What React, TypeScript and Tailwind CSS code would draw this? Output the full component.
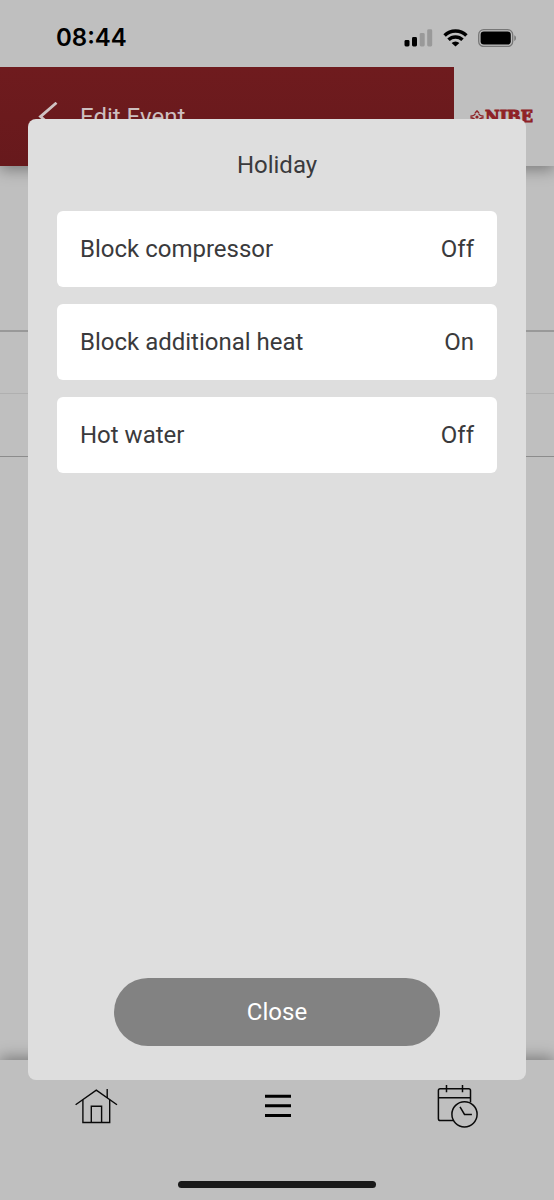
import { useState } from 'react'

const settings = [
  { label: 'Block compressor', value: 'Off' },
  { label: 'Block additional heat', value: 'On' },
  { label: 'Hot water', value: 'Off' }
]

function StatusBar() {
  return (
    <div className="relative z-20 flex h-[67px] shrink-0 items-center justify-between bg-[#bfbfbf] pt-2 pr-[37px] pl-14">
      <span className="font-['Inter'] text-2xl font-semibold text-black">08:44</span>
      <div className="flex items-center gap-[10px]">
        <svg width="29" height="18" viewBox="0 0 29 18" aria-hidden="true">
          <rect x="0.5" y="11" width="5" height="6.5" rx="1.4" />
          <rect x="8" y="8" width="5" height="9.5" rx="1.4" />
          <rect x="15.7" y="4" width="5" height="13.5" rx="1.4" fill="#999999" />
          <rect x="23.2" y="0.3" width="5" height="17.2" rx="1.4" fill="#999999" />
        </svg>
        <svg width="25" height="18" viewBox="0 0 25 18" fill="none" stroke="#000" strokeWidth="3.5" aria-hidden="true">
          <path d="M1.6 6.4a15.6 15.6 0 0 1 21.8 0" />
          <path d="M5.5 10.8a10 10 0 0 1 14 0" />
          <path d="M12.5 17.6 8.6 14a5.5 5.5 0 0 1 7.8 0z" fill="#000" stroke="none" />
        </svg>
        <svg width="39" height="18" viewBox="0 0 39 18" aria-hidden="true">
          <rect x="0.7" y="0.7" width="34" height="16.8" rx="5" fill="none" stroke="#777777" strokeWidth="1.3" />
          <rect x="2.6" y="2.6" width="30.2" height="13" rx="3.3" />
          <path d="M36.3 6.3c2.2.8 2.2 4.8 0 5.6z" fill="#777777" />
        </svg>
      </div>
    </div>
  )
}

function Header() {
  return (
    <header className="relative z-10 flex h-[99px] shrink-0 shadow-[0_4px_14px_rgba(0,0,0,0.35)]">
      <div className="flex flex-1 items-center bg-linear-to-b from-[#6f1b1e] to-[#67191c] pl-[38px]">
        <a href="#" aria-label="Back" className="w-[42px]">
          <svg width="20" height="30" viewBox="0 0 20 30" fill="none" stroke="#cfc3c3" strokeWidth="2.8" aria-hidden="true">
            <path d="M18.5 0.8 2.5 14.6l16 13.8" />
          </svg>
        </a>
        <h1 className="text-2xl text-[#cdbfc0]">Edit Event</h1>
      </div>
      <div className="flex w-[100px] items-center gap-px bg-[#bfbfbf] pl-4 text-[#8f2226]">
        <svg width="14" height="14" viewBox="0 0 14 14" fill="none" stroke="currentColor" strokeWidth="1.4" aria-hidden="true">
          <path d="M5 2.9 7 .9l2 2M5 11.1l2 2 2-2" />
          <path d="M.4 6.2Q4.6 5.8 5.2 3.6M13.6 6.2Q9.4 5.8 8.8 3.6M.4 7.8Q4.6 8.2 5.2 10.4M13.6 7.8Q9.4 8.2 8.8 10.4" />
          <circle cx="7" cy="7" r="1.6" fill="currentColor" stroke="none" />
        </svg>
        <span className="font-['DejaVu_Serif'] text-base font-bold [-webkit-text-stroke:1px_#8f2226]">NIBE</span>
      </div>
    </header>
  )
}

function BottomNav() {
  return (
    <nav className="relative z-10 flex h-[140px] shrink-0 flex-col items-center bg-[#bfbfbf] shadow-[0_-3px_14px_rgba(0,0,0,0.35)]">
      <div className="flex w-full flex-1 items-start justify-between pt-6 pr-[76px] pl-[75px]">
        <a href="#" aria-label="Home">
          <svg width="43" height="42" viewBox="0 0 43 42" fill="none" stroke="#0a0a0a" strokeWidth="1.4" aria-hidden="true">
            <path d="M.6 20.8 21.3 6.2 42 20.8" />
            <path d="M7.9 15.8v22.7h26.8V15.8" />
            <path d="M16.3 38.5V22.3h10.3v16.2" />
            <path d="M32.2 5v9" />
          </svg>
        </a>
        <button type="button" aria-label="Menu">
          <svg width="26" height="42" viewBox="0 0 26 42" stroke="#000" strokeWidth="3" aria-hidden="true">
            <path d="M0 12.2h26M0 21.8h26M0 31.4h26" />
          </svg>
        </button>
        <a href="#" aria-label="Schedule">
          <svg width="41" height="44" viewBox="0 0 41 44" fill="none" stroke="#0a0a0a" strokeWidth="1.5" aria-hidden="true">
            <path d="M16.5 36.6H3.2a1.8 1.8 0 0 1-1.8-1.8V6.6a1.8 1.8 0 0 1 1.8-1.8h28.5a1.8 1.8 0 0 1 1.8 1.8v11.8" />
            <path d="M1.4 13.7h32.1M9.5 1v7.2M25.5 1v7.2" />
            <circle cx="27.5" cy="30.3" r="12.6" />
            <path d="m23 22.8 4.5 7.6h7.4" />
          </svg>
        </a>
      </div>
      <div className="mb-3 h-[7px] w-[198px] rounded-full bg-[#1a1a1a]" />
    </nav>
  )
}

export default function App() {
  const [open, setOpen] = useState(true)

  return (
    <div className="relative flex min-h-screen flex-col bg-[#bfbfbf] font-['Roboto',sans-serif]">
      <StatusBar />
      <Header />

      {/* Event form behind the dialog */}
      <main className="flex-1">
        <div className="h-[166px] border-b-2 border-[#999999]" />
        <div className="h-[62px] border-b border-[#b0b0b0]" />
        <div className="h-[63px] border-b border-[#8c8c8c]" />
      </main>

      <BottomNav />

      {/* Dialog */}
      {open && (
        <div className="absolute inset-0 z-30 flex px-7 pt-[119px] pb-[120px]">
          <section
            role="dialog"
            aria-labelledby="dialog-title"
            className="flex flex-1 flex-col rounded-lg bg-[#dedede] px-[29px] pt-7 pb-[34px] text-2xl text-[#3a3a3c]"
          >
            <h2 id="dialog-title" className="text-center leading-9">Holiday</h2>
            <ul className="mt-7 flex flex-col gap-[17px]">
              {settings.map((item) => (
                <li key={item.label}>
                  <button
                    type="button"
                    className="flex h-[76px] w-full items-center justify-between rounded-md bg-white px-[23px]"
                  >
                    <span>{item.label}</span>
                    <span>{item.value}</span>
                  </button>
                </li>
              ))}
            </ul>
            <button
              type="button"
              onClick={() => setOpen(false)}
              className="mx-[57px] mt-auto h-[68px] rounded-full bg-[#828282] text-white"
            >
              Close
            </button>
          </section>
        </div>
      )}
    </div>
  )
}
